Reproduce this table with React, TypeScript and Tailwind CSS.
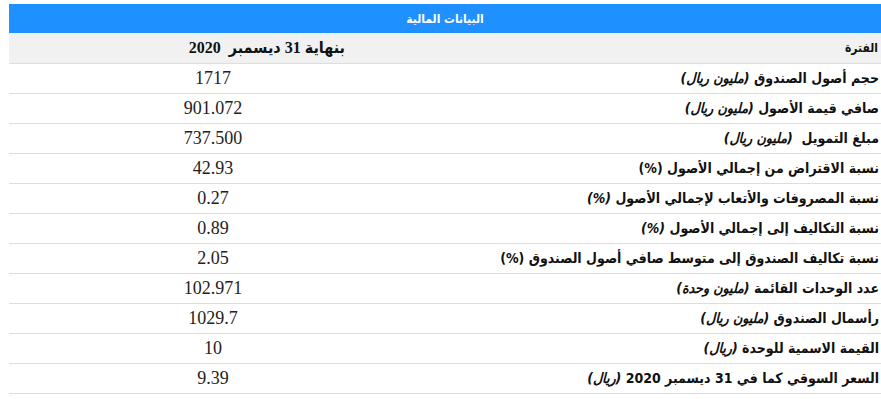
const rows: { label: string; unit?: string; value: string }[] = [
  { label: 'حجم أصول الصندوق ', unit: '(مليون ريال)', value: '1717' },
  { label: 'صافي قيمة الأصول ', unit: '(مليون ريال)', value: '901.072' },
  { label: 'مبلغ التمويل  ', unit: '(مليون ريال)', value: '737.500' },
  { label: 'نسبة الاقتراض من إجمالي الأصول (%)', value: '42.93' },
  { label: 'نسبة المصروفات والأتعاب لإجمالي الأصول ', unit: '(%)', value: '0.27' },
  { label: 'نسبة التكاليف إلى إجمالي الأصول ', unit: '(%)', value: '0.89' },
  { label: 'نسبة تكاليف الصندوق إلى متوسط صافي أصول الصندوق (%)', value: '2.05' },
  { label: 'عدد الوحدات القائمة ', unit: '(مليون وحدة)', value: '102.971' },
  { label: 'رأسمال الصندوق ', unit: '(مليون ريال)', value: '1029.7' },
  { label: 'القيمة الاسمية للوحدة ', unit: '(ريال)', value: '10' },
  { label: 'السعر السوقي كما في 31 ديسمبر 2020 ', unit: '(ريال)', value: '9.39' },
];

export default function App() {
  return (
    <div className="bg-white w-[881px] h-[399px] pl-[9px] pt-[4px] overflow-hidden">
      <table dir="rtl" className="w-[872px] border-collapse text-[#111]">
        <thead>
          <tr className="h-[29px] bg-[#1e90ff]">
            <th colSpan={2} className="text-center text-white font-bold text-[12px] font-['DejaVu_Sans_Condensed','DejaVu_Sans',sans-serif] p-0">
              البيانات المالية
            </th>
          </tr>
        </thead>
        <tbody>
          <tr className="h-[30px] bg-[#f1f1f1] border-b border-[#dddddd]">
            <td className="w-[464px] text-right pr-[3px] font-bold text-[12px] font-['DejaVu_Sans_Condensed','DejaVu_Sans',sans-serif]">الفترة</td>
            <td className="text-right pr-[72px] font-bold text-[16px] font-['Liberation_Serif','DejaVu_Sans_Condensed',serif]">
              بنهاية 31 ديسمبر&nbsp; 2020
            </td>
          </tr>
          {rows.map((r) => (
            <tr key={r.label} className="h-[30px] border-b border-[#dddddd]">
              <td className="text-right pr-[2px] font-bold text-[14px] font-['DejaVu_Sans_Condensed','DejaVu_Sans',sans-serif] whitespace-pre">
                {r.label}
                {r.unit && <span className="italic">{r.unit}</span>}
              </td>
              <td className="text-center text-[18px] text-[#222] font-['Liberation_Serif',serif]">{r.value}</td>
            </tr>
          ))}
        </tbody>
      </table>
    </div>
  );
}
